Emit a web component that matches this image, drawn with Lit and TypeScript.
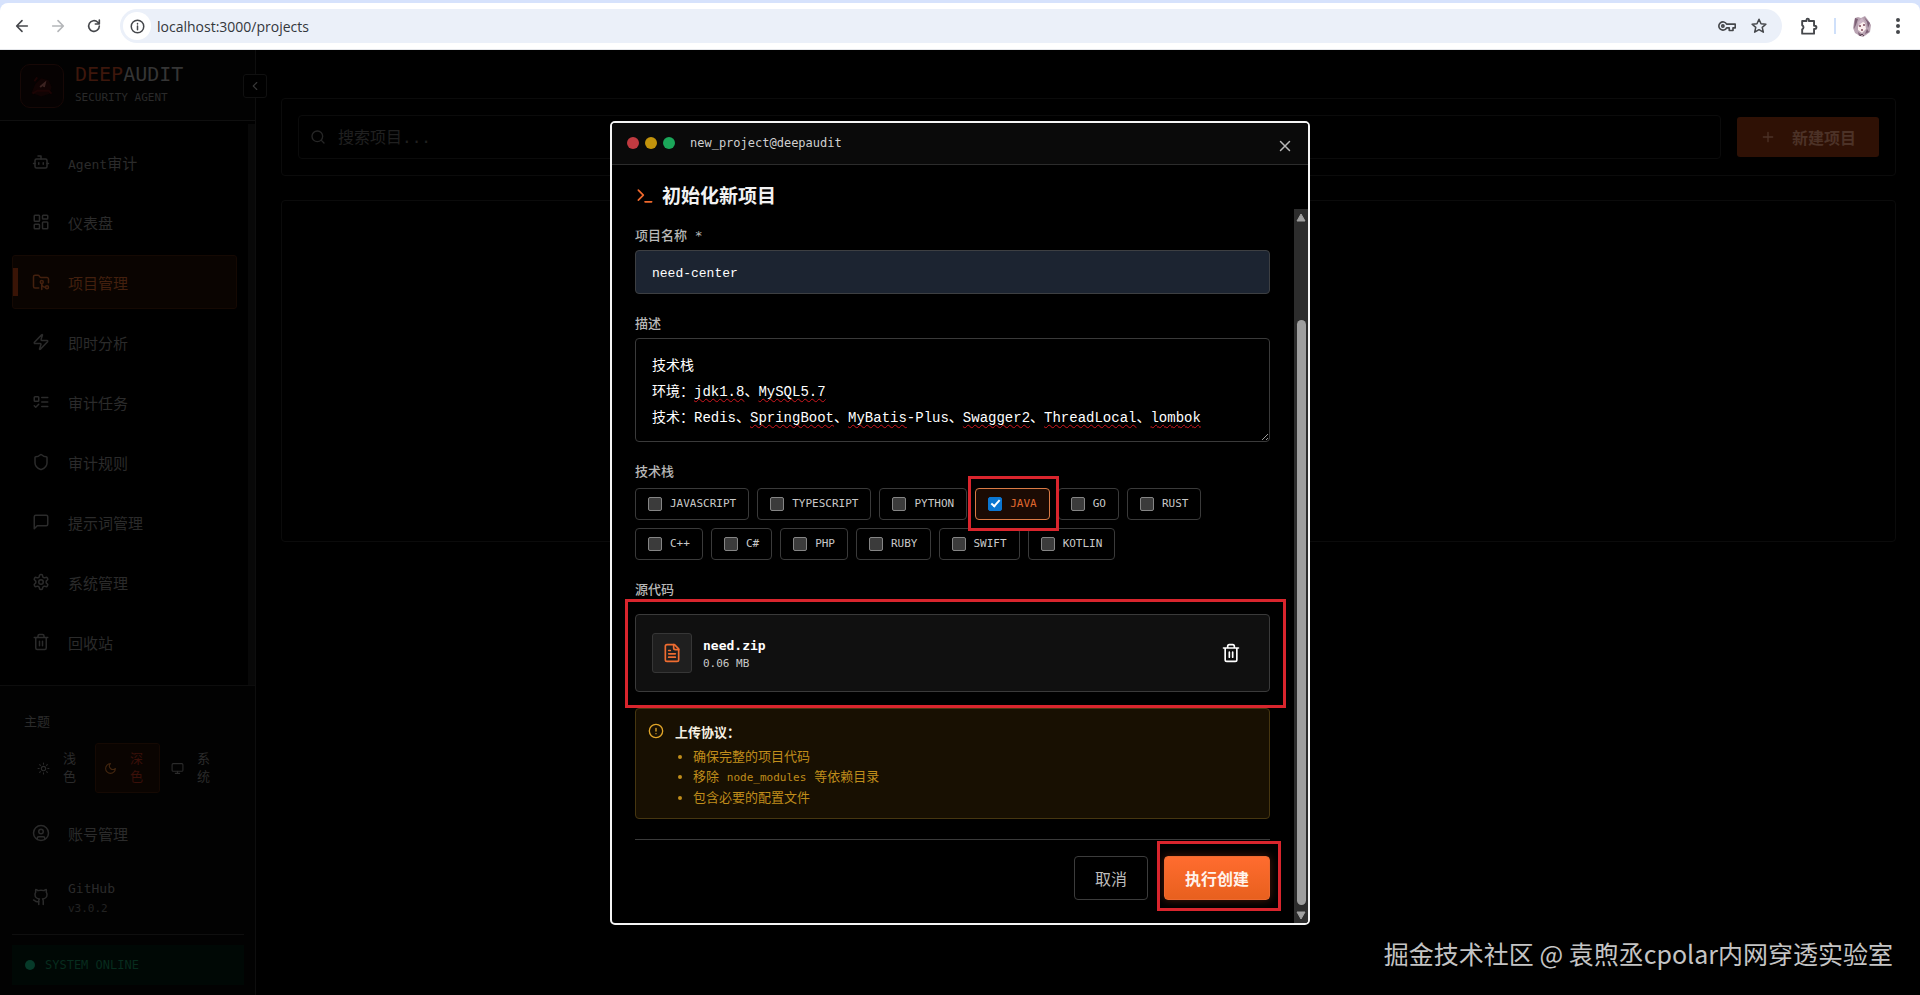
import { LitElement, html, css, svg, nothing } from "lit";
import { customElement } from "lit/decorators.js";
import { classMap } from "lit/directives/class-map.js";

/* 24x24 stroke icons */
const shapes: Record<string, unknown> = {
  bot: svg`<path d="M12 8V4H8"/><rect x="4" y="8" width="16" height="12" rx="2"/><path d="M2 14h2M20 14h2M15 13v2M9 13v2"/>`,
  dashboard: svg`<rect x="3" y="3" width="7" height="8" rx="1"/><rect x="14" y="3" width="7" height="5" rx="1"/><rect x="14" y="12" width="7" height="9" rx="1"/><rect x="3" y="15" width="7" height="6" rx="1"/>`,
  folder: svg`<path d="M9 20H4a2 2 0 0 1-2-2V5a2 2 0 0 1 2-2h3.9a2 2 0 0 1 1.7.9l.8 1.2a2 2 0 0 0 1.7.9H20a2 2 0 0 1 2 2v5"/><circle cx="13" cy="12" r="2"/><path d="M18 19c-2.800 0-5-2.200-5-5v8"/><circle cx="20" cy="19" r="2"/>`,
  zap: svg`<path d="M4 14a1 1 0 0 1-.78-1.630l9.900-10.200a.5.5 0 0 1 .860.460l-1.920 6.020A1 1 0 0 0 13 10h7a1 1 0 0 1 .780 1.630l-9.900 10.200a.5.5 0 0 1-.860-.460l1.920-6.020A1 1 0 0 0 11 14z"/>`,
  tasks: svg`<rect x="3" y="5" width="6" height="6" rx="1"/><path d="m3 17 2 2 4-4M13 6h8M13 12h8M13 18h8"/>`,
  shield: svg`<path d="M20 13c0 5-3.500 7.500-7.660 8.950a1 1 0 0 1-.670-.010C7.500 20.500 4 18 4 13V6a1 1 0 0 1 1-1c2 0 4.500-1.200 6.240-2.720a1.170 1.170 0 0 1 1.520 0C14.510 3.810 17 5 19 5a1 1 0 0 1 1 1z"/>`,
  message: svg`<path d="M21 15a2 2 0 0 1-2 2H7l-4 4V5a2 2 0 0 1 2-2h14a2 2 0 0 1 2 2z"/>`,
  settings: svg`<path d="M12.220 2h-.440a2 2 0 0 0-2 2v.180a2 2 0 0 1-1 1.730l-.430.250a2 2 0 0 1-2 0l-.150-.080a2 2 0 0 0-2.730.730l-.220.380a2 2 0 0 0 .730 2.730l.150.100a2 2 0 0 1 1 1.720v.510a2 2 0 0 1-1 1.740l-.150.090a2 2 0 0 0-.730 2.730l.220.380a2 2 0 0 0 2.730.730l.150-.080a2 2 0 0 1 2 0l.430.250a2 2 0 0 1 1 1.730V20a2 2 0 0 0 2 2h.440a2 2 0 0 0 2-2v-.180a2 2 0 0 1 1-1.730l.430-.250a2 2 0 0 1 2 0l.150.080a2 2 0 0 0 2.730-.730l.220-.390a2 2 0 0 0-.730-2.730l-.150-.080a2 2 0 0 1-1-1.740v-.500a2 2 0 0 1 1-1.740l.150-.090a2 2 0 0 0 .730-2.730l-.220-.380a2 2 0 0 0-2.730-.730l-.150.080a2 2 0 0 1-2 0l-.430-.250a2 2 0 0 1-1-1.730V4a2 2 0 0 0-2-2z"/><circle cx="12" cy="12" r="3"/>`,
  trash: svg`<path d="M3 6h18M19 6v14c0 1-1 2-2 2H7c-1 0-2-1-2-2V6M8 6V4c0-1 1-2 2-2h4c1 0 2 1 2 2v2M10 11v6M14 11v6"/>`,
  sun: svg`<circle cx="12" cy="12" r="4"/><path d="M12 2v2M12 20v2M4.900 4.900l1.400 1.400M17.700 17.700l1.400 1.400M2 12h2M20 12h2M6.300 17.700l-1.400 1.400M19.100 4.900l-1.400 1.400"/>`,
  moon: svg`<path d="M12 3a6 6 0 0 0 9 9 9 9 0 1 1-9-9Z"/>`,
  monitor: svg`<rect x="2" y="3" width="20" height="14" rx="2"/><path d="M8 21h8M12 17v4"/>`,
  user: svg`<circle cx="12" cy="12" r="10"/><circle cx="12" cy="10" r="3"/><path d="M7 20.700V19a2 2 0 0 1 2-2h6a2 2 0 0 1 2 2v1.700"/>`,
  github: svg`<path d="M15 22v-4a4.800 4.800 0 0 0-1-3.500c3 0 6-2 6-5.500.080-1.250-.270-2.480-1-3.500.280-1.150.280-2.350 0-3.500 0 0-1 0-3 1.500-2.640-.500-5.360-.500-8 0C6 2 5 2 5 2c-.300 1.150-.300 2.350 0 3.500A5.400 5.400 0 0 0 4 9c0 3.500 3 5.500 6 5.500-.390.490-.680 1.050-.850 1.650-.170.600-.220 1.230-.150 1.850v4"/><path d="M9 18c-4.510 2-5-2-7-2"/>`,
  search: svg`<circle cx="11" cy="11" r="8"/><path d="m21 21-4.300-4.300"/>`,
  plus: svg`<path d="M5 12h14M12 5v14"/>`,
  left: svg`<path d="m15 18-6-6 6-6"/>`,
  terminal: svg`<path d="m4 17 6-6-6-6M12 19h8"/>`,
  close: svg`<path d="M18 6 6 18M6 6l12 12"/>`,
  file: svg`<path d="M15 2H6a2 2 0 0 0-2 2v16a2 2 0 0 0 2 2h12a2 2 0 0 0 2-2V7Z"/><path d="M14 2v4a2 2 0 0 0 2 2h4M10 9H8M16 13H8M16 17H8"/>`,
  alert: svg`<circle cx="12" cy="12" r="10"/><path d="M12 8v4M12 16h.01"/>`,
  back: svg`<path d="M20 12H4.500M12 4l-8 8 8 8"/>`,
  forward: svg`<path d="M4 12h15.500M12 4l8 8-8 8"/>`,
  reload: svg`<path d="M20 12a8 8 0 1 1-2.400-5.700L20 8.700M20 3v6h-6"/>`,
  info: svg`<circle cx="12" cy="12" r="10"/><path d="M12 11v6M12 7v1"/>`,
  key: svg`<path d="M11.500 9.500A5.500 5.500 0 1 0 11.500 14.500H15V18h5v-3.500h3v-5z"/><circle cx="6.500" cy="12" r="1.500"/>`,
  star: svg`<path d="m12 3 2.700 6 6.500.600-4.900 4.300 1.500 6.400L12 16.900l-5.800 3.400 1.500-6.400-4.900-4.300 6.500-.600z"/>`,
  puzzle: svg`<path d="M4 5h5.500V3.500a1.500 1.500 0 0 1 3 0V5H19v6h1a2 2 0 0 1 0 4h-1v6H4v-5.500a2.700 2.700 0 0 0 0-5z"/>`,
};

const icon = (name: string, size: number, width = 2) => html`<svg
  width=${size} height=${size} viewBox="0 0 24 24" fill="none" stroke="currentColor"
  stroke-width=${width} stroke-linecap="round" stroke-linejoin="round" aria-hidden="true"
>${shapes[name]}</svg>`;

const base = css`
  :host { font-family: "DejaVu Sans Mono", "Noto Sans CJK SC", monospace; }
  *, *::before, *::after { box-sizing: border-box; }
  svg { display: block; flex: none; }
  button { font: inherit; color: inherit; background: none; border: 0; padding: 0; margin: 0; }
  a { color: inherit; text-decoration: none; }
`;

@customElement("browser-bar")
class BrowserBar extends LitElement {
  static styles = [base, css`
    :host { display: block; background: #d6e2fc; padding-top: 3px; }
    .bar { display: flex; align-items: center; height: 47px; background: #fff; border-radius: 8px 8px 0 0;
      padding: 0 14px; color: #45474b; border-bottom: 1px solid #e4e6ea; }
    .nav { display: flex; gap: 20px; padding-right: 18px; }
    .off { color: #b4b6b9; }
    .pill { flex: 1; display: flex; align-items: center; height: 34px; border-radius: 17px; background: #ebf0f9; padding: 0 14px 0 3px; }
    .site { display: grid; place-items: center; width: 28px; height: 28px; border-radius: 14px; background: #fff; }
    .url { flex: 1; min-width: 0; border: 0; background: none; outline: 0; margin-left: 6px; padding: 0;
      font: 14px "Open Sans", "Noto Sans", sans-serif; color: #34373c; }
    .tail { display: flex; gap: 14px; }
    .tools { display: flex; align-items: center; padding-left: 17px; }
    .rule { width: 2px; height: 16px; background: #cfe0fa; margin: 0 16px; }
    .more { margin-left: 18px; }
  `];
  render() {
    return html`<div class="bar">
      <div class="nav">
        <button aria-label="Back">${icon("back", 16, 2.4)}</button>
        <button class="off" aria-label="Forward">${icon("forward", 16, 2.4)}</button>
        <button aria-label="Reload">${icon("reload", 16, 2.4)}</button>
      </div>
      <div class="pill">
        <button class="site" aria-label="Site information">${icon("info", 15, 2.4)}</button>
        <input class="url" aria-label="Address" .value=${"localhost:3000/projects"} />
        <div class="tail">
          <button aria-label="Passwords">${icon("key", 18, 2.2)}</button>
          <button aria-label="Bookmark">${icon("star", 18, 2)}</button>
        </div>
      </div>
      <div class="tools">
        <button aria-label="Extensions">${icon("puzzle", 19, 2.4)}</button>
        <span class="rule"></span>
        <button aria-label="Profile">
          <svg width="20" height="24" viewBox="0 0 20 24">
            <path d="M3 4 6 3l3 1 4-2 3 4 3 5-1 7-4 3-3 2-3-1-5-3-2-5 1-6z" fill="#b9a3b2"/>
            <path d="M3 4l3 1-2 6-2 4zM12 3l3 5 1 6 2-5zM6 18l4 3-3 1zM15 15l2 3-4 2z" fill="#7d6076"/>
            <path d="M6 9l3-3 4 3 1 6-4 4-4-3z" fill="#fbeeee"/>
            <path d="M6 8l4-4 4 5-3-1-3 2-2 3z" fill="#cdb6c6"/>
            <path d="M7 12h2M11 11h2M9 16h2" stroke="#7d4a5c" stroke-width="1.400"/>
            <path d="M8 22l2-2 2 2" stroke="#5a4652" fill="none"/>
          </svg>
        </button>
        <button class="more" aria-label="Menu">
          <svg width="16" height="18" viewBox="0 0 16 18" fill="#45474b"><circle cx="8" cy="3" r="2"/><circle cx="8" cy="9" r="2"/><circle cx="8" cy="15" r="2"/></svg>
        </button>
      </div>
    </div>`;
  }
}

@customElement("side-nav")
class SideNav extends LitElement {
  static styles = [base, css`
    :host { display: flex; flex-direction: column; width: 256px; flex: none; position: relative;
      background: #020202; border-right: 1px solid #0e0e0e; color: #2b2b2b; }
    .brand { display: flex; align-items: center; gap: 11px; height: 71px; padding: 2px 20px 0; border-bottom: 1px solid #0f0f0f; }
    .logo { width: 44px; height: 44px; border: 1px solid #170806; border-radius: 10px; background: #060202; }
    .name { font-size: 20px; line-height: 24px; color: #353535; }
    .name b { font-weight: 400; color: #3d170c; }
    .sub { font-size: 11px; line-height: 24px; color: #2a2a2a; }
    .toggle { position: absolute; top: 24px; right: -12px; width: 24px; height: 24px; display: grid; place-items: center;
      background: #000; border: 1px solid #101010; border-radius: 3px; color: #383838; }
    .scroll { display: flex; border-bottom: 1px solid #0d0d0d; background: #000; flex: 1; }
    .thumb { width: 7px; margin-top: 3px; background: #080808; }
    nav { flex: 1; display: flex; flex-direction: column; gap: 6px; padding: 14px 11px 16px 12px; }
    .item { display: flex; align-items: center; gap: 18px; height: 54px; padding-left: 19px; font-size: 15px;
      border: 1px solid transparent; border-radius: 3px; }
    .item small { font-size: 13px; }
    .on { background: #0a0401; border-color: #150903; color: #43200e;
      background-image: linear-gradient(#391406, #391406); background-size: 5px 28px; background-position: 0 center; background-repeat: no-repeat; }
    .foot { padding: 26px 11px 10px 12px; display: flex; flex-direction: column; }
    .cap { padding-left: 12px; font-size: 13px; line-height: 20px; }
    .themes { display: flex; gap: 2px; margin: 11px 17px 13px 16px; }
    .theme { display: flex; flex: 1; align-items: center; gap: 13px; height: 50px; padding-left: 8px; border: 1px solid transparent;
      border-radius: 3px; font-size: 13px; line-height: 18px; }
    .theme span { width: 13px; }
    .theme.sel { background: #0a0401; border-color: #150903; color: #3b1009; }
    .theme.sel svg { color: #43260f; }
    .gh { margin: 10px 0; }
    .gh small, .ver { display: block; line-height: 20px; padding-top: 2px; }
    .ver { font-size: 11px; line-height: 16px; color: #222; }
    .online { display: flex; align-items: center; gap: 10px; height: 40px; margin-top: 10px; padding-left: 13px; background: #000805;
      font-size: 12px; color: #072c1e; }
    .rule { height: 1px; background: #0f0f0f; }
    .dot { width: 10px; height: 10px; border-radius: 5px; background: #063a29; }
  `];
  render() {
    const items: [string, unknown][] = [
      ["bot", html`<small>Agent</small>审计`], ["dashboard", "仪表盘"], ["folder", "项目管理"], ["zap", "即时分析"],
      ["tasks", "审计任务"], ["shield", "审计规则"], ["message", "提示词管理"], ["settings", "系统管理"], ["trash", "回收站"],
    ];
    const themes: [string, string][] = [["sun", "浅色"], ["moon", "深色"], ["monitor", "系统"]];
    return html`
      <div class="brand">
        <svg class="logo" viewBox="0 0 44 44" fill="none" aria-hidden="true">
          <path d="M11 29l4-9 6-6 8 2 3 7-2 7-9 3z" fill="#110303"/>
          <path d="M12 30l5-3h12l3 3M14 17l3-4" stroke="#1c0404" stroke-width="2"/>
          <path d="M20 23l5-4-1 4" stroke="#3b2220" stroke-width="2"/>
        </svg>
        <div><div class="name"><b>DEEP</b>AUDIT</div><div class="sub">SECURITY AGENT</div></div>
      </div>
      <button class="toggle" aria-label="收起">${icon("left", 14)}</button>
      <div class="scroll">
        <nav>${items.map(([i, t]) => html`<a href="#" class=${classMap({ item: true, on: i === "folder" })}>${icon(i, 18)}<span>${t}</span></a>`)}</nav>
        <div class="thumb"></div>
      </div>
      <div class="foot">
        <div class="cap">主题</div>
        <div class="themes">${themes.map(([i, t]) => html`<button class=${classMap({ theme: true, sel: i === "moon" })}>${icon(i, 13)}<span>${t}</span></button>`)}</div>
        <a href="#" class="item">${icon("user", 18)}<span>账号管理</span></a>
        <a href="#" class="item gh">${icon("github", 18)}<span><small>GitHub</small><span class="ver">v3.0.2</span></span></a>
        <div class="rule"></div>
        <div class="online"><span class="dot"></span>SYSTEM ONLINE</div>
      </div>`;
  }
}

@customElement("project-list")
class ProjectList extends LitElement {
  static styles = [base, css`
    :host { flex: 1; min-width: 0; display: flex; flex-direction: column; gap: 24px; padding: 48px 24px 48px 25px; }
    .card { border: 1px solid #0b0b0b; border-radius: 4px; }
    .tools { display: flex; align-items: center; gap: 16px; padding: 16px; }
    .search { flex: 1; display: flex; align-items: center; gap: 12px; height: 44px; padding-left: 11px;
      border: 1px solid #0b0b0b; border-radius: 4px; color: #262626; }
    .search input { flex: 1; border: 0; outline: 0; background: none; padding: 0; font: inherit; font-size: 16px; color: #2b2b2b; }
    .search input::placeholder { color: #202020; opacity: 1; }
    .new { display: flex; align-items: center; gap: 16px; height: 40px; padding: 0 23px; border-radius: 3px;
      background: #2f1105; color: #4c3227; font-size: 16px; font-weight: 700; }
    .list { height: 342px; }
  `];
  render() {
    return html`
      <div class="card tools">
        <label class="search">${icon("search", 16)}<input aria-label="搜索项目" placeholder="搜索项目..." /></label>
        <button class="new">${icon("plus", 16)}新建项目</button>
      </div>
      <div class="card list"></div>`;
  }
}

@customElement("project-dialog")
class ProjectDialog extends LitElement {
  static styles = [base, css`
    :host { position: absolute; inset: 0; display: flex; align-items: center; justify-content: center; }
    .dialog { position: relative; width: 700px; max-width: 100%; background: #000; border: 2px solid #f4f4f4; border-radius: 5px; color: #b8b8b8; }
    .bar { display: flex; align-items: center; gap: 15px; height: 42px; padding: 0 15px; background: #0a0a0a;
      border-bottom: 1px solid #2c2c2c; border-radius: 3px 3px 0 0; font-size: 12px; color: #d0d0d0; }
    .dots { display: flex; gap: 6px; }
    .dots i { width: 12px; height: 12px; border-radius: 6px; }
    .red { background: #c03a40; } .amber { background: #c2930c; } .green { background: #1ba659; }
    .x { position: absolute; top: 14px; right: 14px; color: #b8b8b8; }
    h2 { display: flex; align-items: center; gap: 7px; margin: 0; padding: 18px 23px 0; font-size: 19px; line-height: 26px; color: #f2f2f2; }
    h2 svg { color: #f0682c; }
    .body { display: flex; }
    form { flex: 1; min-width: 0; padding: 17px 24px 23px 23px; display: flex; flex-direction: column; gap: 20px; }
    .field { display: flex; flex-direction: column; border: 0; margin: 0; padding: 0; min-width: 0; }
    .label { font-size: 13px; font-weight: 500; line-height: 20px; padding: 0; margin-bottom: 4px; }
    .stack { margin-bottom: 6px; }
    .src { margin-bottom: 14px; }
    .text { width: 100%; height: 44px; padding: 4px 16px 0; border: 1px solid #3d3f42; border-radius: 4px; outline: 0;
      background: #1c2431; color: #fff; font: 13px "Liberation Mono", "Noto Sans CJK SC", monospace; }
    .area { position: relative; display: grid; }
    .area textarea, .ghost { grid-area: 1 / 1; margin: 0; padding: 14px 16px 10px; border: 1px solid #3a3a3a; border-radius: 4px;
      font: 14px/26px "Liberation Mono", "Noto Sans CJK SC", monospace; white-space: pre-wrap; }
    .area textarea { height: 104px; background: none; color: #fff; outline: 0; resize: vertical; overflow: hidden; }
    .ghost { border-color: transparent; color: transparent; pointer-events: none; }
    .ghost u { text-decoration: underline wavy #d0181e 1px; text-underline-offset: 2px; text-decoration-skip-ink: none; }
    .chips { display: flex; flex-wrap: wrap; gap: 8px; }
    .chip { position: relative; display: flex; align-items: center; gap: 8px; height: 32px; padding: 0 12px;
      border: 1px solid #3a3a3a; border-radius: 4px; font-size: 11px; font-weight: 400; color: #c8c8c8; }
    .chip input { appearance: none; display: grid; place-items: center; width: 14px; height: 14px; margin: 0; background: #3b3b3b; border: 1px solid #858585; border-radius: 2px; }
    .chip input:checked { background: #0b76d1; border-color: #0b76d1; }
    .chip input:checked::after { content: ""; width: 5px; height: 9px; margin-bottom: 2px; border: solid #fff; border-width: 0 2px 2px 0; transform: rotate(42deg); }
    .picked { border-color: #d97a45; background: #1b0b04; color: #e0692f; }
    .mark { position: absolute; border: 3px solid #d9252d; pointer-events: none; z-index: 1; }
    .mark-chip { inset: -13px -10px -12px -8px; }
    .mark-file { inset: -16px -17px -17px -11px; }
    .mark-run { inset: -15px -11px -11px -7px; }
    .file { position: relative; display: flex; align-items: center; gap: 11px; padding: 18px 16px; border: 1px solid #3a3a3a; border-radius: 4px; background: #101010; }
    .thumb { display: grid; place-items: center; width: 40px; height: 40px; border: 1px solid #363636; border-radius: 3px; background: #1f1f1f; color: #ef6c30; }
    .meta { flex: 1; padding-top: 4px; font-size: 11px; line-height: 18px; color: #c8c8c8; }
    .meta b { display: block; font-size: 13px; color: #fff; }
    .del { display: grid; place-items: center; width: 44px; height: 40px; color: #fff; }
    .block { display: flex; flex-direction: column; gap: 16px; }
    .warn { display: flex; gap: 11px; padding: 14px 12px 10px; border: 1px solid #463610; border-radius: 4px; background: #181002;
      font-size: 13px; line-height: 20px; color: #c08d1b; }
    .warn svg { color: #e2a629; }
    .warn b { color: #f6f0e2; }
    .warn ul { margin: 4px 0 0; padding: 0 0 0 18px; }
    .warn li::marker { font-size: 13px; }
    .warn code { font: inherit; font-size: 11px; }
    .actions { display: flex; justify-content: flex-end; gap: 16px; padding-top: 16px; border-top: 1px solid #3a3a3a; }
    .btn { height: 44px; padding: 0 20px; border: 1px solid #3c3c3c; border-radius: 4px; font-size: 16px; color: #bcbcbc; }
    .run { position: relative; }
    .go { border-color: #ee6a30; background: linear-gradient(#ff6c2f, #e8601e); color: #fff3ec; font-weight: 700; box-shadow: 0 0 10px #48190a; }
    .track { width: 14px; background: #2c2c2c; display: flex; flex-direction: column; align-items: center; padding: 4px 0 3px; color: #a0a0a0; border-radius: 0 0 3px 0; }
    .track svg { fill: currentColor; }
    .grip { flex: 1; width: 9px; margin: 98px 0 6px; border-radius: 5px; background: #9f9f9f; }
  `];
  render() {
    const stacks = ["JAVASCRIPT", "TYPESCRIPT", "PYTHON", "JAVA", "GO", "RUST", "C++", "C#", "PHP", "RUBY", "SWIFT", "KOTLIN"];
    const note = "技术栈\n环境：jdk1.8、MySQL5.7\n技术：Redis、SpringBoot、MyBatis-Plus、Swagger2、ThreadLocal、lombok";
    const unknown = /(jdk1\.8|MySQL5\.7|SpringBoot|MyBatis|Swagger2|ThreadLocal|lombok)/;
    return html`<div class="dialog" role="dialog" aria-labelledby="title">
      <div class="bar"><span class="dots"><i class="red"></i><i class="amber"></i><i class="green"></i></span>new_project@deepaudit</div>
      <button class="x" aria-label="关闭">${icon("close", 18)}</button>
      <h2 id="title">${icon("terminal", 20)}初始化新项目</h2>
      <div class="body">
        <form>
          <div class="field"><label class="label" for="name">项目名称 *</label><input class="text" id="name" .value=${"need-center"} /></div>
          <div class="field">
            <label class="label" for="desc">描述</label>
            <div class="area">
              <div class="ghost" aria-hidden="true">${note.split(unknown).map((p, i) => (i % 2 ? html`<u>${p}</u>` : p))}</div>
              <textarea id="desc" spellcheck="false" .value=${note}></textarea>
            </div>
          </div>
          <fieldset class="field">
            <legend class="label stack">技术栈</legend>
            <div class="chips">${stacks.map((s) => html`<label class=${classMap({ chip: true, picked: s === "JAVA" })}>
              <input type="checkbox" .checked=${s === "JAVA"} />${s}${s === "JAVA" ? html`<span class="mark mark-chip"></span>` : nothing}</label>`)}</div>
          </fieldset>
          <div class="field">
            <div class="label src">源代码</div>
            <div class="block">
              <div class="file">
                <span class="thumb">${icon("file", 20)}</span>
                <div class="meta"><b>need.zip</b>0.06 MB</div>
                <button type="button" class="del" aria-label="删除">${icon("trash", 20)}</button>
                <span class="mark mark-file"></span>
              </div>
              <div class="warn">${icon("alert", 16)}<div><b>上传协议：</b>
                <ul><li>确保完整的项目代码</li><li>移除 <code>node_modules</code> 等依赖目录</li><li>包含必要的配置文件</li></ul></div>
              </div>
            </div>
          </div>
          <div class="actions">
            <button type="button" class="btn">取消</button>
            <div class="run"><button type="button" class="btn go">执行创建</button><span class="mark mark-run"></span></div>
          </div>
        </form>
        <div class="track" aria-hidden="true">
          <svg width="10" height="9"><path d="M5 1 9 8H1z" stroke="currentColor" stroke-linejoin="round"/></svg>
          <span class="grip"></span>
          <svg width="10" height="9"><path d="M5 8 9 1H1z" stroke="currentColor" stroke-linejoin="round"/></svg>
        </div>
      </div>
    </div>`;
  }
}

@customElement("app-root")
class AppRoot extends LitElement {
  static styles = [base, css`
    :host { display: flex; flex-direction: column; min-height: 100vh; background: #000; }
    .pane { position: relative; flex: 1; display: flex; }
    .credit { position: absolute; right: 27px; bottom: 24px; font: 25px/36px "Noto Sans CJK SC", sans-serif; color: #c4c4c4; }
  `];
  render() {
    return html`<browser-bar></browser-bar>
      <div class="pane">
        <side-nav></side-nav>
        <project-list></project-list>
        <project-dialog></project-dialog>
        <div class="credit">掘金技术社区 @ 袁煦丞cpolar内网穿透实验室</div>
      </div>`;
  }
}
